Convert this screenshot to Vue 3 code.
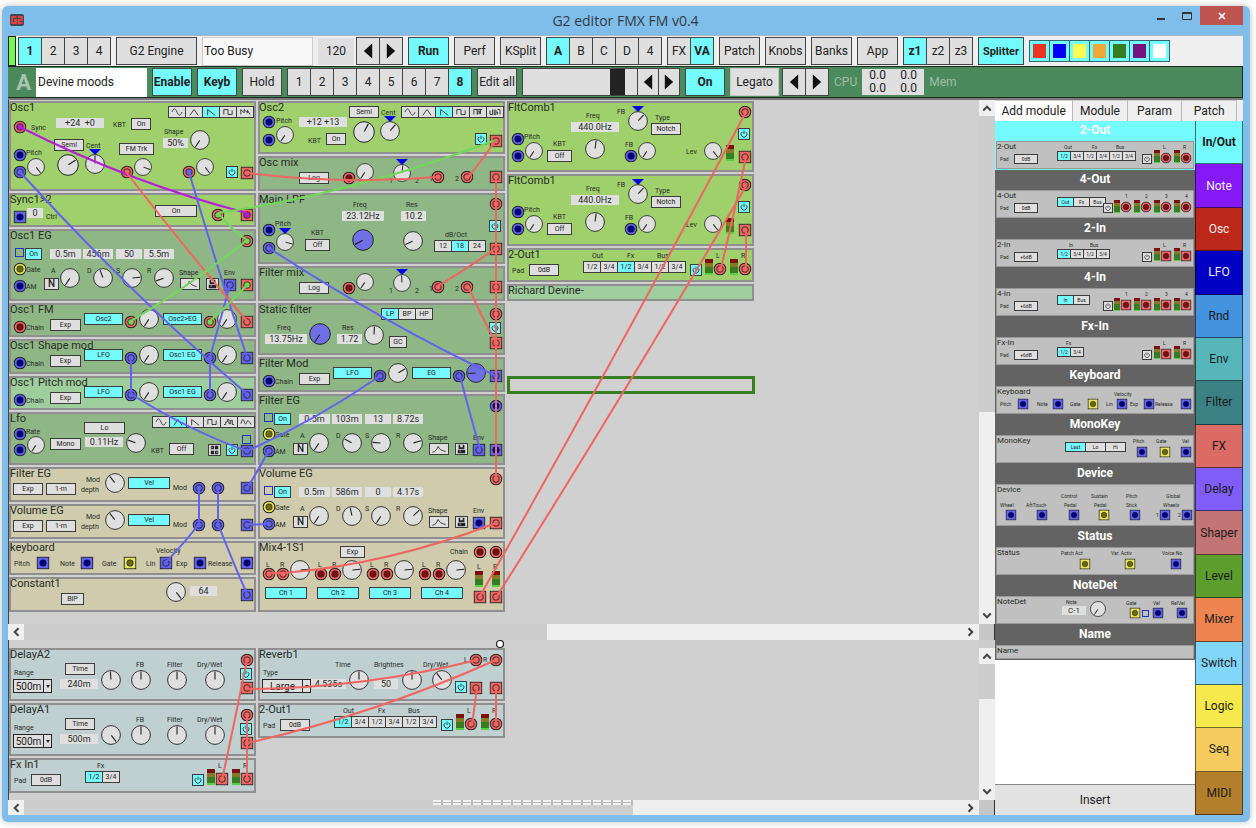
<script setup>
import { h } from 'vue'

/* ---------- part constructors ---------- */
const label = (x, y, text) => ({ kind: 'label', x, y, text })
const value = (x, y, w, text) => ({ kind: 'value', x, y, w, text })
const button = (x, y, w, text, on) => ({ kind: 'button', x, y, w, text, on })
const segment = (x, y, w, items, active) => ({ kind: 'segment', x, y, w, items, active })
const waves = (x, y, items, active) => ({ kind: 'waves', x, y, w: 18, items, active })
const knob = (x, y, d, angle, blue) => ({ kind: 'knob', x, y, d, angle, blue })
const marker = (x, y) => ({ kind: 'marker', x, y })
const input = (x, y, color, cable) => ({ kind: 'jack', x, y, color, cable })
const output = (x, y, color, cable) => ({ kind: 'jack', square: true, x, y, color, cable })
const power = (x, y, on = true) => ({ kind: 'icon', icon: 'power', x, y, w: 12, on })
const icon = (x, y, w, name) => ({ kind: 'icon', icon: name, x, y, w })
const meter = (x, y) => ({ kind: 'meter', x, y })
const check = (x, y) => ({ kind: 'check', x, y })
const select = (x, y, w, text) => ({ kind: 'select', x, y, w, text })

const plug = { r: '#ee6561', b: '#6262ee', y: '#e6e45e', g: '#74d75c', p: '#b321d6' }
const hole = { r: '#7a1010', b: '#000080', y: '#6c6a10' }

const wavePaths = {
  sine: 'M3 6C5 1 7 1 9 6S13 11 15 6',
  tri: 'M4 10L9 3L14 10',
  saw: 'M5 10V3L14 10',
  square: 'M4 9V3H9V9H14V4',
  multi: 'M4 9V3L8 7V3L12 7V4L15 9',
  dual: 'M4 9V3H8V9M6 3H14M9 9V5H11V8H12V3',
  comb: 'M3 4V9H6V3M8 3V9H10V3M10 6H12V9M12 3H15V9',
  steps: 'M3 9H5V6H7V3H9V8H11V4H13V9H15',
  smooth: 'M3 8C5 0 6 3 7 6S9 9 10 6S12 4 15 9',
}

const iconPaths = {
  power: 'M6 2V6M4 3.4A3.5 3.5 0 1 0 8 3.4',
  curve: 'M2 10C6 9 7 7 9 3C10 6 13 8 18 9',
}

const place = (p, s) => ({ left: Math.round(p.x * s) + 'px', top: Math.round(p.y * s) + 'px' })
const box = (p, s) => ({ ...place(p, s), width: Math.round(p.w * s) + 'px' })

const draw = {
  label: (p, s) => h('span', { class: 'p-label', style: place(p, s) }, p.text),
  value: (p, s) => h('output', { class: 'p-value', style: box(p, s) }, p.text),
  button: (p, s) => h('button', { class: ['p-button', p.on && 'on'], style: box(p, s) }, p.text),
  segment: (p, s) =>
    h('div', { class: 'p-segment', style: place(p, s) }, p.items.map((item, i) =>
      h('button', { class: ['p-button', i === p.active && 'on'], style: { width: Math.round(p.w * s) + 'px' } }, item))),
  waves: (p, s) =>
    h('div', { class: 'p-segment', style: place(p, s) }, p.items.map((item, i) =>
      h('button', { class: ['p-button', i === p.active && 'on'], style: { width: p.w + 'px' }, 'aria-label': item },
        h('svg', { class: 'p-wave', viewBox: '0 0 18 12' }, h('path', { d: wavePaths[item] }))))),
  knob: (p, s) => {
    const d = Math.round(p.d * s)
    return h('label', {
      class: 'p-knob',
      style: { ...place(p, s), width: d + 'px', height: d + 'px' },
    }, [
      h('svg', { viewBox: '0 0 20 20' }, [
        h('circle', { cx: 10, cy: 10, r: 9.4, class: p.blue ? 'dial blue' : 'dial' }),
        h('path', { d: 'M10 9.5V1.6', class: 'needle', transform: `rotate(${p.angle} 10 10)` }),
      ]),
      h('input', { type: 'range', min: -147, max: 147, value: p.angle, 'aria-label': 'Knob' }),
    ])
  },
  marker: (p, s) => h('span', { class: 'p-marker', style: place(p, s) }),
  jack: (p, s) => {
    const inner = p.cable ? plug[p.cable] : hole[p.color]
    const shape = p.square
      ? h('rect', { x: 0.7, y: 0.7, width: 12.6, height: 12.6, fill: plug[p.color], class: 'ring' })
      : h('circle', { cx: 7, cy: 7, r: 6.3, fill: plug[p.color], class: 'ring' })
    return h('button', { class: 'p-jack', style: place(p, s), 'aria-label': p.square ? 'Output' : 'Input' },
      h('svg', { viewBox: '0 0 14 14' }, [
        shape,
        h('circle', { cx: 7, cy: 7, r: 3.5, fill: inner, class: p.cable ? 'ring thin' : 'ring dark' }),
      ]))
  },
  icon: (p, s) => {
    let art
    if (p.icon === 'letter') art = 'N'
    else if (p.icon === 'disk') {
      art = h('svg', { viewBox: '0 0 13 12' }, [
        h('path', { d: 'M3 1H10V6H3ZM2 7H11V11H2Z', fill: '#222' }),
        h('path', { d: 'M5 1H8V4H5ZM4 8H6V9H4Z', fill: '#ddd' }),
      ])
    } else if (p.icon === 'grid') {
      art = h('svg', { viewBox: '0 0 13 12' }, [
        h('path', { d: 'M2 1H6V5H2ZM7 1H11V5H7ZM2 7H6V11H2ZM7 7H11V11H7Z', fill: '#222' }),
        h('path', { d: 'M3 2H4V4H3ZM9 8H10V10H9Z', fill: '#eee' }),
      ])
    } else {
      art = h('svg', { class: 'p-wave', viewBox: p.icon === 'curve' ? '0 0 20 12' : '0 0 12 12' },
        h('path', { d: iconPaths[p.icon] }))
    }
    return h('button', { class: ['p-button', 'p-icon', p.on && 'on', p.icon], style: box(p, s), 'aria-label': p.icon }, [art])
  },
  meter: (p, s) => h('span', { class: 'p-meter', style: place(p, s) }),
  check: (p, s) => h('span', { class: 'p-check', style: place(p, s) }),
  select: (p, s) =>
    h('div', { class: 'p-select', style: box(p, s) }, [
      h('select', { 'aria-label': 'Range' }, h('option', p.text)),
      h('span', { class: 'drop' }),
    ]),
}

const Parts = (props) => props.parts.map((p) => draw[p.kind](p, props.scale))
Parts.props = { parts: { type: Array, required: true }, scale: { type: Number, default: 1 } }

/* ---------- module faces ---------- */
const MIN = -147
const MAX = 142

const envelope = (vals, angles, top, am, env, out) => [
  check(6, 19), button(16, 19, 17, 'On', true),
  value(41, 20, 31, vals[0]), value(74, 20, 30, vals[1]), value(107, 20, 26, vals[2]), value(135, 20, 30, vals[3]),
  label(17, 41, 'Gate'), input(11, 40, 'y'), label(17, 58, 'AM'), input(11, 57, 'b', am),
  icon(35, 49, 15, 'letter'), label(42, 42, 'A'), label(78, 42, 'D'), label(107, 42, 'S'), label(138, 42, 'R'),
  knob(61, 49, 20, angles[0]), knob(94, 49, 20, angles[1]), knob(123, 49, 20, angles[2]), knob(155, 49, 20, angles[3]),
  label(170, 44, 'Shape'), icon(171, 49, 20, 'curve'), icon(197, 49, 13, 'disk'), label(215, 44, 'Env'),
  input(238, 12, top[0], top[1]), output(221, 56, 'b', env), output(238, 56, out[0], out[1]),
]

const modMixer = (color, a, b, jackA, jackB, angles, out, chain, blue) => [
  input(11, 24, chain), label(17, 25, 'Chain'), button(41, 16, 31, 'Exp'),
  button(75, 10, 39, a, true), input(122, 19, color, jackA), knob(140, 16, 20, angles[0]),
  button(154, 10, 39, b, true), knob(218, 16, 20, angles[1], blue), input(201, 19, color, jackB),
  output(238, 19, color, out),
]

const mix2 = (angle) => [
  button(41, 16, 30, 'Log'), input(91, 22, 'r'), knob(107, 16, 18, MIN),
  marker(144, 6), knob(144, 17, 18, angle), label(131, 25, '1'), label(157, 25, '2'),
  label(171, 23, '1'), input(180, 21, 'r', 'r'), label(197, 23, '2'), input(209, 21, 'r', 'r'), output(238, 21, 'r', 'r'),
]

const levelMod = () => [
  button(4, 16, 30, 'Exp'), button(37, 16, 30, '1-m'), label(77, 13, 'Mod'), label(72, 23, 'depth'),
  knob(106, 16, 20, -38), button(119, 10, 42, 'Vel', true), label(164, 21, 'Mod'),
  input(190, 21, 'b', 'b'), input(209, 21, 'b', 'b'), output(238, 21, 'b', 'b'),
]

const keyboardFace = (lin) => [
  label(5, 23, 'Pitch'), output(34, 22, 'b'), label(51, 23, 'Note'), output(78, 22, 'b'),
  label(93, 23, 'Gate'), output(121, 22, 'y'), label(147, 10, 'Velocity'), label(137, 23, 'Lin'),
  output(157, 22, 'b', lin), label(167, 23, 'Exp'), output(191, 22, 'b'), label(199, 23, 'Release'), output(238, 22, 'b'),
]

const comb = () => [
  input(11, 38, 'b'), label(17, 36, 'Pitch'), input(11, 55, 'b'), knob(27, 50, 18, MIN),
  label(46, 43, 'KBT'), button(40, 49, 25, 'Off'), label(79, 15, 'Freq'), value(64, 21, 48, '440.0Hz'),
  knob(88, 48, 20, 8), label(110, 11, 'FB'), marker(131, 8), knob(131, 20, 20, 42),
  label(148, 17, 'Type'), button(144, 22, 30, 'Notch'), label(118, 44, 'FB'), input(124, 55, 'b'),
  knob(140, 50, 18, MIN), label(179, 51, 'Lev'), knob(206, 50, 18, MAX), meter(219, 44),
  input(238, 11, 'r', 'r'), power(231, 27), output(238, 56, 'r', 'r'),
]

const stereoEnd = (jack, cable, on) => [
  power(183, 16, on), meter(198, 11), label(209, 8, 'L'), jack(213, 21, 'r', cable),
  meter(223, 11), label(234, 8, 'R'), jack(238, 21, 'r', cable),
]

const twoOut = (active, cable, on = true) => [
  label(5, 23, 'Pad'), button(22, 16, 30, '0dB'), label(85, 8, 'Out'), label(120, 8, 'Fx'), label(150, 8, 'Bus'),
  segment(76, 13, 18, ['1/2', '3/4', '1/2', '3/4', '1/2', '3/4'], active), ...stereoEnd(input, cable, on),
]

const fxIn = (pad, cable, on = true) => [
  label(5, 23, 'Pad'), button(22, 16, 30, pad), label(88, 8, 'Fx'), segment(76, 13, 18, ['1/2', '3/4'], 0),
  ...stereoEnd(output, cable, on),
]

const delay = (time, angle) => [
  label(5, 25, 'Range'), select(4, 31, 39, '500m'), button(56, 15, 30, 'Time'), value(51, 31, 38, time),
  knob(102, 32, 20, angle), label(127, 17, 'FB'), knob(132, 32, 20, 0), label(158, 17, 'Filter'), knob(168, 32, 20, 0),
  label(188, 17, 'Dry/Wet'), knob(206, 32, 20, 0), input(238, 12, 'r', 'r'), power(231, 20), output(238, 40, 'r', 'r'),
]

const quad = (jack) => [163, 188, 213, 238].flatMap((x, i) => [
  meter(x - 15, 12), label(x - 2, 8, String(i + 1)), jack(x, 21, 'r'),
])

/* ---------- patch ---------- */
const voiceColumns = [
  [
    { name: 'Osc1', rows: 5, tone: 'lime', parts: [
      input(11, 26, 'r', 'p'), label(22, 27, 'Sync'), value(47, 17, 48, '+24  +0'), label(104, 24, 'KBT'), button(122, 17, 20, 'On'),
      waves(159, 5, ['sine', 'tri', 'saw', 'square', 'multi'], 2), label(155, 31, 'Shape'), value(154, 37, 25, '50%'), knob(191, 39, 20, MIN),
      button(45, 38, 30, 'Semi'), label(77, 45, 'Cent'), knob(59, 64, 22, 57), marker(86, 51), knob(86, 63, 20, 0),
      input(11, 54, 'b'), label(17, 52, 'Pitch'), input(11, 71, 'b', 'b'), knob(27, 66, 18, MAX),
      button(110, 42, 35, 'FM Trk'), input(118, 71, 'r', 'r'), knob(134, 66, 18, 110),
      input(180, 71, 'r', 'b'), knob(196, 66, 18, MAX), power(217, 65), output(238, 72, 'r', 'r'),
    ] },
    { name: 'Sync1>2', rows: 2, tone: 'lime', parts: [
      output(11, 24, 'b'), value(18, 15, 16, '0'), label(37, 24, 'Ctrl'), button(146, 12, 42, 'On'), input(209, 22, 'r', 'g'), output(238, 22, 'r', 'p'),
    ] },
    { name: 'Osc1 EG', rows: 4, tone: 'green', parts: envelope(['0.5m', '456m', '50', '5.5m'], [MIN, -20, 85, -110], ['r', 'g'], null, 'b', ['r', 'g']) },
    { name: 'Osc1 FM', rows: 2, tone: 'green', parts: modMixer('r', 'Osc2', 'Osc2>EG', 'g', 'g', [MIN, MIN], 'r', 'r') },
    { name: 'Osc1 Shape mod', rows: 2, tone: 'green', parts: modMixer('b', 'LFO', 'Osc1 EG', 'b', 'b', [MIN, MIN], 'b', 'b') },
    { name: 'Osc1 Pitch mod', rows: 2, tone: 'mint', parts: modMixer('b', 'LFO', 'Osc1 EG', 'b', 'b', [MIN, MIN], 'b', 'b') },
    { name: 'Lfo', rows: 3, tone: 'green', parts: [
      label(17, 20, 'Rate'), input(11, 22, 'b'), input(11, 38, 'b'), knob(27, 33, 18, MIN), button(41, 26, 31, 'Mono'),
      button(75, 10, 41, 'Lo'), value(76, 25, 38, '0.11Hz'), knob(127, 31, 20, -70),
      waves(143, 4, ['sine', 'tri', 'saw', 'square', 'steps', 'smooth'], 1), label(142, 39, 'KBT'), button(160, 31, 25, 'Off'),
      icon(199, 32, 13, 'grid'), power(217, 32), check(233, 23), output(238, 39, 'b', 'b'),
    ] },
    { name: 'Filter EG', rows: 2, tone: 'sand', parts: levelMod() },
    { name: 'Volume EG', rows: 2, tone: 'sand', parts: levelMod() },
    { name: 'keyboard', rows: 2, tone: 'sand', parts: keyboardFace('b') },
    { name: 'Constant1', rows: 2, tone: 'sand', parts: [
      button(52, 16, 23, 'BiP'), knob(167, 15, 20, MAX), value(181, 9, 27, '64'), output(238, 18, 'b', 'b'),
    ] },
  ],
  [
    { name: 'Osc2', rows: 3, tone: 'lime', parts: [
      input(11, 21, 'b'), label(18, 20, 'Pitch'), input(11, 39, 'b'), knob(27, 34, 18, MIN), value(41, 16, 48, '+12 +13'),
      label(50, 40, 'KBT'), button(68, 32, 20, 'On'), button(91, 5, 30, 'Semi'), knob(106, 31, 22, 28), label(123, 12, 'Cent'),
      marker(132, 18), knob(132, 30, 20, 40), waves(143, 5, ['sine', 'tri', 'saw', 'square', 'dual', 'comb'], 2),
      power(217, 32), output(238, 40, 'r', 'r'),
    ] },
    { name: 'Osc mix', rows: 2, tone: 'green', parts: mix2(6) },
    { name: 'Main LPF', rows: 4, tone: 'green', parts: [
      input(11, 37, 'b'), label(17, 31, 'Pitch'), marker(27, 38), knob(27, 49, 18, 105), input(11, 55, 'b', 'b'),
      label(53, 40, 'KBT'), button(47, 46, 25, 'Off'), label(95, 12, 'Freq'), value(84, 18, 42, '23.12Hz'), knob(105, 47, 22, -120, true),
      label(148, 12, 'Res'), value(143, 18, 25, '10.2'), knob(155, 48, 20, -115), label(187, 42, 'dB/Oct'),
      segment(176, 47, 18, ['12', '18', '24'], 1), input(238, 11, 'r', 'r'), power(231, 27), output(238, 56, 'r', 'r'),
    ] },
    { name: 'Filter mix', rows: 2, tone: 'green', parts: mix2(-3) },
    { name: 'Static filter', rows: 3, tone: 'green', parts: [
      label(19, 25, 'Freq'), value(7, 31, 42, '13.75Hz'), knob(62, 31, 22, MIN, true), label(84, 25, 'Res'), value(79, 31, 25, '1.72'),
      knob(116, 32, 20, 3), segment(123, 5, 18, ['LP', 'BP', 'HP'], 0), button(131, 33, 18, 'GC'),
      input(238, 11, 'r', 'r'), power(231, 19), output(238, 40, 'r', 'r'),
    ] },
    { name: 'Filter Mod', rows: 2, tone: 'green', parts: modMixer('b', 'LFO', 'EG', 'b', 'b', [60, -93], 'b', 'b', true) },
    { name: 'Filter EG', rows: 4, tone: 'green', parts: envelope(['0.5m', '103m', '13', '8.72s'], [MIN, -62, -86, 74], ['b', null], 'b', 'b', ['b', null]) },
    { name: 'Volume EG', rows: 4, tone: 'sand', parts: envelope(['0.5m', '586m', '0', '4.17s'], [MIN, -12, MIN, 48], ['r', 'r'], 'b', null, ['r', 'r']) },
    { name: 'Mix4-1S1', rows: 4, tone: 'sand', parts: [
      button(82, 5, 25, 'Exp'), label(192, 11, 'Chain'), input(222, 11, 'r'), input(238, 11, 'r'),
      ...[0, 1, 2, 3].flatMap((i) => [
        label(8 + i * 52, 24, 'L'), label(22 + i * 52, 24, 'R'), knob(42 + i * 52, 29, 20, 85),
        input(11 + i * 52, 33, 'r', i ? null : 'r'), input(25 + i * 52, 33, 'r', i ? null : 'r'),
        button(7 + i * 52, 46, 42, 'Ch ' + (i + 1), true),
      ]),
      label(219, 26, 'L'), label(235, 26, 'R'), meter(217, 30), meter(234, 30), output(222, 56, 'r', 'r'), output(238, 56, 'r', 'r'),
    ] },
  ],
  [
    { name: 'FltComb1', rows: 4, tone: 'lime', parts: comb() },
    { name: 'FltComb1', rows: 4, tone: 'lime', parts: comb() },
    { name: '2-Out1', rows: 2, tone: 'lime', parts: twoOut(2, 'r') },
    { name: 'Richard Devine-', rows: 1, tone: 'mint', parts: [] },
  ],
]

const fxColumns = [
  [
    { name: 'DelayA2', rows: 3, tone: 'steel', parts: delay('240m', -4) },
    { name: 'DelayA1', rows: 3, tone: 'steel', parts: delay('500m', MAX) },
    { name: 'Fx In1', rows: 2, tone: 'steel', parts: fxIn('0dB', 'r') },
  ],
  [
    { name: 'Reverb1', rows: 3, tone: 'steel', parts: [
      label(5, 25, 'Type'), select(4, 31, 49, 'Large'), value(53, 31, 35, '4.535s'), label(77, 17, 'Time'), knob(101, 32, 20, 0),
      label(116, 17, 'Brightnes'), value(116, 31, 24, '50'), knob(154, 32, 20, 0), label(165, 17, 'Dry/Wet'), knob(184, 32, 20, -38),
      label(206, 12, 'L'), input(218, 12, 'r', 'r'), label(225, 12, 'R'), input(238, 12, 'r', 'r'),
      power(197, 33), output(218, 40, 'r', 'r'), output(238, 40, 'r', 'r'),
    ] },
    { name: '2-Out1', rows: 2, tone: 'steel', parts: twoOut(0, 'r') },
  ],
]

const cable = (color, x1, y1, x2, y2, sag = 0) => ({
  color: plug[color],
  d: `M${x1} ${y1}Q${(x1 + x2) / 2} ${(y1 + y2) / 2 + sag} ${x2} ${y2}`,
})

const voiceCables = [
  cable('p', 12, 27, 239, 113, 14),
  cable('b', 12, 72, 239, 294, 14),
  cable('b', 181, 72, 239, 257, 6),
  cable('b', 222, 185, 202, 257),
  cable('b', 202, 257, 202, 294),
  cable('b', 123, 257, 123, 294),
  cable('b', 123, 294, 239, 351, 8),
  cable('b', 239, 351, 372, 276, 8),
  cable('r', 118, 72, 239, 221, 4),
  cable('g', 210, 113, 239, 140, 4),
  cable('g', 210, 113, 488, 40, 16),
  cable('g', 239, 140, 123, 221, 6),
  cable('g', 239, 185, 202, 221, 2),
  cable('r', 239, 73, 430, 77, 10),
  cable('r', 488, 40, 460, 77, 2),
  cable('r', 488, 77, 488, 378),
  cable('r', 488, 148, 430, 186, 2),
  cable('r', 460, 186, 488, 242, 4),
  cable('b', 261, 148, 488, 276, 10),
  cable('b', 452, 276, 472, 349, 2),
  cable('b', 261, 350, 239, 388, 2),
  cable('b', 239, 424, 261, 423, 2),
  cable('b', 191, 388, 191, 424),
  cable('b', 210, 388, 210, 424),
  cable('b', 191, 424, 158, 462, 2),
  cable('b', 210, 424, 239, 494, 2),
  cable('r', 261, 473, 276, 473),
  cable('r', 276, 473, 488, 423, 16),
  cable('r', 472, 496, 738, 12, 8),
  cable('r', 489, 496, 738, 86, 8),
  cable('r', 738, 57, 713, 168, 4),
  cable('r', 738, 130, 738, 168),
]

const fxCables = [
  cable('r', 239, 20, 214, 140, 2),
  cable('r', 239, 74, 239, 140),
  cable('r', 239, 49, 469, 20, 14),
  cable('r', 239, 103, 488, 20, 14),
  cable('r', 469, 48, 464, 85),
  cable('r', 488, 48, 488, 85),
]

/* ---------- library ---------- */
const library = [
  { name: '2-Out', rows: 2, selected: true, parts: twoOut(0, null, false) },
  { name: '4-Out', rows: 2, parts: [
    label(5, 23, 'Pad'), button(22, 16, 30, '0dB'), segment(76, 9, 21, ['Out', 'Fx', 'Bus'], 0), power(134, 16, false), ...quad(input),
  ] },
  { name: '2-In', rows: 2, parts: [
    label(5, 23, 'Pad'), button(22, 16, 30, '+6dB'), label(91, 7, 'In'), label(118, 7, 'Bus'),
    segment(76, 13, 18, ['1/2', '3/4', '1/2', '3/4'], 0), ...stereoEnd(output, null, false),
  ] },
  { name: '4-In', rows: 2, parts: [
    label(5, 23, 'Pad'), button(22, 16, 30, '+6dB'), segment(76, 9, 21, ['In', 'Bus'], 0), power(134, 16, false), ...quad(output),
  ] },
  { name: 'Fx-In', rows: 2, parts: fxIn('+6dB', null, false) },
  { name: 'Keyboard', rows: 2, parts: keyboardFace(null) },
  { name: 'MonoKey', rows: 2, parts: [
    segment(86, 9, 26, ['Last', 'Lo', 'Hi'], 0), label(171, 8, 'Pitch'), output(182, 21, 'b'),
    label(200, 8, 'Gate'), output(211, 21, 'y'), label(232, 8, 'Vel'), output(238, 21, 'b'),
  ] },
  { name: 'Device', rows: 3, parts: [
    label(5, 26, 'Wheel'), output(19, 39, 'b'), label(37, 26, 'AftTouch'), output(58, 39, 'b'),
    label(81, 15, 'Control'), label(85, 26, 'Pedal'), output(97, 39, 'b'), label(119, 15, 'Sustain'), label(123, 26, 'Pedal'), output(135, 39, 'y'),
    label(163, 15, 'Pitch'), label(163, 26, 'Stick'), output(174, 39, 'b'), label(212, 15, 'Global'), label(209, 26, 'Wheels'),
    label(200, 39, '1'), output(211, 39, 'b'), label(228, 39, '2'), output(239, 39, 'b'),
  ] },
  { name: 'Status', rows: 2, parts: [
    label(81, 8, 'Patch Act'), output(111, 21, 'y'), label(144, 8, 'Var. Activ'), output(168, 21, 'y'), label(207, 8, 'Voice No.'), output(225, 21, 'b'),
  ] },
  { name: 'NoteDet', rows: 2, parts: [
    label(88, 8, 'Note'), value(83, 12, 30, 'C-1'), knob(127, 16, 20, MIN), label(163, 9, 'Gate'), output(174, 21, 'y'), check(182, 17),
    label(196, 9, 'Vel'), output(203, 21, 'b'), label(219, 9, 'RelVel'), output(232, 21, 'b'),
  ] },
  { name: 'Name', rows: 1, parts: [] },
]

const categories = [
  ['In/Out', 'inout'], ['Note', 'note'], ['Osc', 'osc'], ['LFO', 'lfo'], ['Rnd', 'rnd'], ['Env', 'env'], ['Filter', 'filter'], ['FX', 'fx'],
  ['Delay', 'delay'], ['Shaper', 'shaper'], ['Level', 'level'], ['Mixer', 'mixer'], ['Switch', 'switch'], ['Logic', 'logic'], ['Seq', 'seq'], ['MIDI', 'midi'],
].map(([name, tone]) => ({ name, tone }))

const swatches = ['red', 'blue', 'yellow', 'orange', 'green', 'purple', 'white']
</script>

<template>
  <div class="window">
    <header class="titlebar">
      <svg class="logo" viewBox="0 0 14 12" aria-hidden="true">
        <rect width="14" height="12" rx="2" fill="#4a4550" />
        <path d="M6.5 3H2V9H6V6H4M8 3H12V6H8.5V9H12.5" fill="none" stroke="#e0413c" stroke-width="1.8" />
      </svg>
      <h1>G2 editor FMX FM v0.4</h1>
      <div class="controls">
        <button aria-label="Minimize"><svg viewBox="0 0 10 10"><path d="M1 8H9" stroke="#333" stroke-width="2" /></svg></button>
        <button aria-label="Maximize"><svg viewBox="0 0 10 10"><path d="M.5 1.5H9.5V8.5H.5ZM.5 2.5H9.5" fill="none" stroke="#333" /></svg></button>
        <button class="close" aria-label="Close"><svg viewBox="0 0 10 10"><path d="M2 2L8 8M8 2L2 8" stroke="#fff" stroke-width="1.7" /></svg></button>
      </div>
    </header>

    <main class="client">
      <div class="bar perf">
        <span class="lamp"></span>
        <div class="group first"><button v-for="n in 4" :key="n" :class="{ on: n === 1 }">{{ n }}</button></div>
        <button class="engine">G2 Engine</button>
        <input class="field soft" aria-label="Performance" value="Too Busy">
        <output class="tempo">120</output>
        <div class="group arrows">
          <button aria-label="Slower"><svg viewBox="0 0 12 18"><path d="M11 0V18L1 9Z" /></svg></button>
          <button aria-label="Faster"><svg viewBox="0 0 12 18"><path d="M1 0V18L11 9Z" /></svg></button>
        </div>
        <button class="wide on">Run</button>
        <button class="wide">Perf</button>
        <button class="wide">KSplit</button>
        <div class="group"><button v-for="s in ['A', 'B', 'C', 'D', '4']" :key="s" :class="{ on: s === 'A' }">{{ s }}</button></div>
        <div class="group"><button>FX</button><button class="on">VA</button></div>
        <button v-for="s in ['Patch', 'Knobs', 'Banks', 'App']" :key="s" class="wide">{{ s }}</button>
        <div class="group"><button v-for="s in ['z1', 'z2', 'z3']" :key="s" :class="{ on: s === 'z1' }">{{ s }}</button></div>
        <button class="splitter on">Splitter</button>
        <div class="swatches"><button v-for="s in swatches" :key="s" :class="s" :aria-label="s"></button></div>
      </div>

      <div class="bar slot">
        <span class="slot-name">A</span>
        <input class="field" aria-label="Patch name" value="Devine moods">
        <button class="wide on">Enable</button>
        <button class="wide on">Keyb</button>
        <button class="wide">Hold</button>
        <div class="group"><button v-for="n in 8" :key="n" :class="{ on: n === 8 }">{{ n }}</button></div>
        <button class="wide">Edit all</button>
        <label class="morph">
          <span class="thumb"></span>
          <input type="range" aria-label="Volume" min="0" max="100" value="83">
        </label>
        <div class="group arrows narrow">
          <button aria-label="Previous"><svg viewBox="0 0 12 18"><path d="M11 0V18L1 9Z" /></svg></button>
          <button aria-label="Next"><svg viewBox="0 0 12 18"><path d="M1 0V18L11 9Z" /></svg></button>
        </div>
        <button class="wide on">On</button>
        <button class="legato">Legato</button>
        <div class="group arrows last">
          <button aria-label="Previous mode"><svg viewBox="0 0 12 18"><path d="M11 0V18L1 9Z" /></svg></button>
          <button aria-label="Next mode"><svg viewBox="0 0 12 18"><path d="M1 0V18L11 9Z" /></svg></button>
        </div>
        <span class="stat">CPU</span>
        <output class="load"><span>0.0</span><span>0.0</span><span>0.0</span><span>0.0</span></output>
        <span class="stat">Mem</span>
      </div>

      <div class="work">
        <div class="patches">
          <section class="pane voice" aria-label="Voice area">
            <div class="surface">
              <div v-for="(col, c) in voiceColumns" :key="c" class="column">
                <article v-for="(m, i) in col" :key="i" class="module" :class="m.tone" :style="{ gridRowEnd: 'span ' + m.rows }">
                  <h2>{{ m.name }}</h2>
                  <Parts :parts="m.parts" />
                </article>
                <div v-if="c === 2" class="cursor"></div>
              </div>
              <svg class="cables"><path v-for="(w, i) in voiceCables" :key="i" :d="w.d" :stroke="w.color" /></svg>
            </div>
            <div class="vscroll">
              <button aria-label="Up"><svg viewBox="0 0 8 8"><path d="M1 6L4 3L7 6" /></svg></button>
              <span class="track"></span><span class="bar-thumb"></span>
              <button aria-label="Down"><svg viewBox="0 0 8 8"><path d="M1 2L4 5L7 2" /></svg></button>
            </div>
          </section>
          <div class="hscroll">
            <button aria-label="Left"><svg viewBox="0 0 8 8"><path d="M6 1L3 4L6 7" /></svg></button>
            <span class="track"></span><span class="bar-thumb"></span>
            <button aria-label="Right"><svg viewBox="0 0 8 8"><path d="M2 1L5 4L2 7" /></svg></button>
            <span class="corner"></span>
          </div>
          <section class="pane fx-area" aria-label="FX area">
            <div class="surface">
              <div v-for="(col, c) in fxColumns" :key="c" class="column">
                <article v-for="(m, i) in col" :key="i" class="module" :class="m.tone" :style="{ gridRowEnd: 'span ' + m.rows }">
                  <h2>{{ m.name }}</h2>
                  <Parts :parts="m.parts" />
                </article>
              </div>
              <svg class="cables">
                <path v-for="(w, i) in fxCables" :key="i" :d="w.d" :stroke="w.color" />
                <circle cx="492" cy="4" r="3.5" fill="#fff" stroke="#222" stroke-width="1.2" />
              </svg>
            </div>
            <div class="vscroll">
              <button aria-label="Up"><svg viewBox="0 0 8 8"><path d="M1 6L4 3L7 6" /></svg></button>
              <span class="track"></span><span class="bar-thumb"></span>
              <button aria-label="Down"><svg viewBox="0 0 8 8"><path d="M1 2L4 5L7 2" /></svg></button>
            </div>
          </section>
          <div class="hscroll lower">
            <button aria-label="Left"><svg viewBox="0 0 8 8"><path d="M6 1L3 4L6 7" /></svg></button>
            <span class="track"><span class="grip"></span></span><span class="bar-thumb"></span>
            <button aria-label="Right"><svg viewBox="0 0 8 8"><path d="M2 1L5 4L2 7" /></svg></button>
            <span class="corner"></span>
          </div>
        </div>

        <aside class="side">
          <nav class="tabs">
            <button class="active">Add module</button><button>Module</button><button>Param</button><button>Patch</button>
          </nav>
          <div class="side-body">
            <div class="library">
              <div class="entries">
                <section v-for="m in library" :key="m.name" class="entry" :class="{ selected: m.selected }">
                  <h3>{{ m.name }}</h3>
                  <article class="module mini" :class="'rows-' + m.rows">
                    <h2>{{ m.name }}</h2>
                    <Parts :parts="m.parts" :scale="0.8" />
                  </article>
                </section>
              </div>
              <button class="insert">Insert</button>
            </div>
            <nav class="categories">
              <button v-for="c in categories" :key="c.name" :class="c.tone">{{ c.name }}</button>
            </nav>
          </div>
        </aside>
      </div>
    </main>
  </div>
</template>

<style scoped>
.window {
  display: flex;
  flex-direction: column;
  flex: 1;
  min-width: 0;
  padding: 0 7px 7px 6px;
  background: #7fbdea;
  border-radius: 6px;
  box-shadow: 0 0 6px rgba(0, 0, 0, 0.25);
  font-family: Roboto, "Liberation Sans", sans-serif;
  color: #222;
}
button { font: inherit; color: inherit; padding: 0; margin: 0; border: 0; border-radius: 0; background: none; }

.titlebar { display: grid; grid-template-columns: 140px 1fr 140px; height: 29px; flex: none; align-items: center; }
.logo { width: 14px; height: 12px; margin-left: 2px; margin-top: -2px; }
.titlebar h1 { margin: 0; text-align: center; font: 14px "Open Sans", sans-serif; color: #333c44; }
.controls { display: flex; align-self: start; justify-content: flex-end; }
.controls button { width: 26px; height: 19px; display: flex; align-items: center; justify-content: center; }
.controls svg { width: 10px; height: 10px; }
.controls .close { width: 43px; background: #bd5450; }

.client { flex: 1; min-height: 0; display: flex; flex-direction: column; background: #efefef; }
.bar { display: flex; align-items: center; gap: 5px; flex: none; box-sizing: border-box; font-size: 12px; }
.perf { height: 31px; background: #efefef; border-top: 1px solid #a5b7c4; }
.slot { height: 32px; background: #4a8a5c; border: 1px solid #1c2b20; border-left: 0; }
.lamp { width: 8px; box-sizing: border-box; align-self: stretch; background: #75f850; border: 1px solid #222; }
.first { margin-left: -3px; }
.bar button { height: 28px; background: #dfdfdf; border: 1px solid #444; text-align: center; white-space: nowrap; flex: none; }
.bar button.on { background: #74fbfd; font-weight: 700; }
.group { display: flex; }
.group button { width: 24px; }
.group button + button { margin-left: -1px; }
.bar .wide { width: 41px; }
.slot .wide { width: 40px; }
.bar .engine { width: 81px; }
.bar .splitter { width: 46px; font-size: 11px; }
.field { box-sizing: border-box; width: 111px; height: 29px; border: 0; padding: 0 2px; font: inherit; color: #222; background: #fff; }
.field.soft { background: #f8f8f8; border: 1px solid #ccc; padding: 0 1px; }
.tempo { width: 36px; line-height: 27px; background: #dfdfdf; text-align: center; margin-right: -3px; }
.arrows svg { width: 10px; height: 18px; display: block; margin: auto; fill: #111; }
.narrow { margin-left: -6px; }
.bar .narrow button { width: 22px; }
.swatches { display: flex; }
.bar .swatches button { width: 21px; height: 22px; border: 1px solid #2f6a6a; outline: 3px solid #74fbfd; outline-offset: -4px; }
.swatches button + button { margin-left: -1px; }
.bar .swatches .red { background: #eb3423; }
.bar .swatches .blue { background: #0000f5; }
.bar .swatches .yellow { background: #fffe54; }
.bar .swatches .orange { background: #f0a73a; }
.bar .swatches .green { background: #377e22; }
.bar .swatches .purple { background: #75147c; }
.bar .swatches .white { background: #fff; }
.slot-name { width: 23px; text-align: right; font-size: 22px; font-weight: 700; color: #a9c4b1; }
.morph { position: relative; width: 114px; height: 26px; border: 1px solid #444; background: #dfdfdf; display: flex; align-items: stretch; box-sizing: content-box; flex: none; }
.morph input { position: absolute; inset: 0; width: 100%; margin: 0; opacity: 0; }
.morph .thumb { width: 15px; background: #222; margin-left: 87px; }
.bar .legato { width: 49px; border-color: #c8c8c8; }
.last { margin-left: -2px; }
.stat { color: #a3bda9; }
.load { display: grid; grid-template-columns: 1fr 1fr; width: 62px; background: #dfdfdf; line-height: 13px; text-align: center; }

.work { flex: 1; min-height: 0; display: flex; border-top: 2px solid #777; }
.patches { flex: 1; min-width: 0; display: flex; flex-direction: column; background: #d0d0d0; }
.pane { display: flex; min-height: 0; overflow: hidden; }
.voice { flex: 524 1 0; }
.fx-area { flex: 160 1 0; }
.surface { position: relative; flex: 1; min-width: 0; overflow: hidden; display: flex; align-items: flex-start; padding: 1px 0 0; border-left: 1px solid #444; box-sizing: border-box; }
.fx-area .surface { padding-top: 8px; }
.column { display: grid; grid-template-rows: repeat(28, 1fr); width: 249px; height: 513px; flex: none; }
.fx-area .column { grid-template-rows: repeat(8, 1fr); height: 147px; }
.cables { position: absolute; left: -1px; top: 0; width: 100%; height: 100%; fill: none; stroke-width: 2; pointer-events: none; }
.cursor { grid-row: 16; border: 3px solid #377e22; margin-right: 1px; }

.vscroll { width: 16px; flex: none; display: flex; flex-direction: column; background: #cdcdcd; }
.vscroll button, .hscroll button { width: 16px; height: 16px; background: #efefef; flex: none; display: flex; align-items: center; justify-content: center; }
.vscroll svg, .hscroll svg { width: 10px; height: 10px; fill: none; stroke: #444; stroke-width: 1.6; }
.voice .track { flex: 296; }
.bar-thumb { background: #efefef; }
.voice .bar-thumb { flex: 196; }
.fx-area .vscroll { padding-top: 8px; }
.fx-area .track { flex: 35; }
.fx-area .bar-thumb { flex: 85; }
.hscroll { height: 16px; flex: none; display: flex; background: #cdcdcd; }
.hscroll .track { flex: 524; display: flex; justify-content: flex-end; }
.hscroll .bar-thumb { flex: 416; }
.hscroll .corner { width: 16px; background: #c6c6c6; border-right: 1px solid #333; box-sizing: border-box; }
.lower { height: 15px; }
.lower button { height: 15px; }
.lower .track { flex: 610; }
.lower .bar-thumb { flex: 330; }
.grip {
  width: 200px;
  height: 5px;
  background:
    linear-gradient(transparent 0 2px, #b8b8b8 2px 3px, transparent 3px),
    repeating-linear-gradient(90deg, #f2f2f2 0 8px, #bbb 8px 10px);
}

.side { width: 248px; flex: none; display: flex; flex-direction: column; background: #efefef; }
.tabs { display: flex; height: 21px; flex: none; font-size: 12px; padding-right: 6px; }
.tabs button { flex: 57 1 0; border-right: 1px solid #bbb; border-top: 1px solid #ccc; }
.tabs .active { background: #fff; flex-grow: 82; }
.side-body { flex: 1; min-height: 0; display: flex; }
.library { flex: 1; min-width: 0; display: flex; flex-direction: column; background: #fff; }
.entries { flex: 1; min-height: 0; overflow: hidden; }
.entry { background: #636363; padding: 0 1px; display: flow-root; }
.entry.selected { background: #74fbfd; }
.entry h3 { margin: 0; font-size: 12px; line-height: 19px; height: 20px; color: #fff; text-align: center; }
.insert { height: 31px; flex: none; background: #e2e2e2; border-top: 1px solid #888; font-size: 12px; }
.categories { width: 48px; flex: none; display: flex; flex-direction: column; }
.categories button { flex: 1 1 0; border: 1px solid rgba(0, 0, 0, 0.55); border-top: 0; font-size: 12px; color: #1a1a1a; }
.categories .inout { background: #74fbfd; font-weight: 700; }
.categories .note { background: #8419f5; color: #eee; }
.categories .osc { background: #bb281a; color: #eee; }
.categories .lfo { background: #0000c4; color: #eee; }
.categories .rnd { background: #4393df; }
.categories .env { background: #57b6ba; }
.categories .filter { background: #3b8083; }
.categories .fx { background: #dc6b65; }
.categories .delay { background: #7f5df6; }
.categories .shaper { background: #c37474; }
.categories .level { background: #5c9d2d; }
.categories .mixer { background: #ee8550; }
.categories .switch { background: #82d6fa; }
.categories .logic { background: #f6e94c; }
.categories .seq { background: #f6cb5e; }
.categories .midi { background: #b47f2c; }
</style>

<style>
html, body { margin: 0; height: 100%; background: #fdfdfd; }
#app { min-height: 100vh; box-sizing: border-box; padding: 6px 6px 6px 2px; display: flex; }

.module { position: relative; box-sizing: border-box; margin: 0 2px 2px 0; border: 2px solid #8f8f8f; min-height: 0; font-family: Roboto, sans-serif; color: #262b26; }
.module h2 { margin: -1px 0 0 -1px; font-size: 11px; line-height: 12px; font-weight: 400; white-space: nowrap; }
.module.lime { background: #9fd06c; }
.module.green { background: #8fb785; }
.module.mint { background: #9fce9e; }
.module.sand { background: #cfcbac; }
.module.steel { background: #c0d0d0; }

.p-label, .p-value, .p-button, .p-segment, .p-knob, .p-marker, .p-jack, .p-icon, .p-meter, .p-check, .p-select { position: absolute; margin: -2px 0 0 -2px; box-sizing: border-box; }
.p-label { font-size: 7px; line-height: 8px; margin-top: -6px; white-space: nowrap; }
.p-value { height: 10px; background: #dfdfdf; font-size: 9px; line-height: 10px; text-align: center; white-space: pre; }
.module .p-button { height: 12px; padding: 0; border: 1px solid #3c3c3c; background: #dfdfdf; font: 7px Roboto, sans-serif; line-height: 10px; color: #222; text-align: center; white-space: nowrap; border-radius: 0; overflow: hidden; }
.module .p-button.on { background: #74fbfd; }
.p-segment { display: flex; }
.module .p-segment .p-button { position: static; margin: 0; flex: none; }
.module .p-segment .p-button + .p-button { margin-left: -1px; }
.p-segment svg { display: block; width: 16px; height: 10px; margin: 0; }
.p-wave path { fill: none; stroke: #222; stroke-width: 1; }
.module .p-icon svg { display: block; width: 100%; height: 100%; }
.module .p-icon.letter { font-size: 10px; font-weight: 500; }
.p-knob { transform: translate(-50%, -50%); display: block; }
.p-knob svg { display: block; width: 100%; height: 100%; overflow: visible; }
.p-knob input { position: absolute; inset: 0; width: 100%; height: 100%; margin: 0; opacity: 0; }
.dial { fill: #dfdfdf; stroke: #222; stroke-width: 0.9; }
.dial.blue { fill: #6f6fe6; }
.needle { stroke: #222; stroke-width: 1.1; }
.p-marker { width: 0; height: 0; transform: translate(-50%, -50%); border: 6px solid transparent; border-top: 6px solid #0000f0; border-bottom: 0; }
.module .p-jack { width: 13px; height: 13px; padding: 0; border: 0; background: none; transform: translate(-50%, -50%); }
.p-jack svg { display: block; width: 100%; height: 100%; }
.ring { stroke: #222; stroke-width: 1.1; }
.ring.thin { stroke-width: 0.9; }
.ring.dark { stroke: #101020; stroke-width: 0.6; }
.p-meter { width: 8px; height: 16px; background: linear-gradient(#7a1010 0 25%, #86792a 25% 50%, #377e22 50% 90%, #55d040 90%); }
.p-check { width: 9px; height: 9px; border: 1px solid #2233cc; }
.p-select { height: 14px; border: 1px solid #222; background: #dfdfdf; display: flex; }
.p-select select { appearance: none; flex: 1; min-width: 0; border: 0; border-radius: 0; padding: 0; background: none; font: 10px Roboto, sans-serif; color: #222; text-align: center; }
.p-select .drop { width: 8px; border-left: 1px solid #222; display: flex; align-items: center; justify-content: center; box-sizing: border-box; }
.p-select .drop::after { content: ""; border: 2px solid transparent; border-top: 3px solid #222; border-bottom: 0; }

.module.mini { margin: 0 0 1px; height: 28px; border: 1px solid #999; background: #c0c0c0; }
.module.mini.rows-3 { height: 42px; }
.module.mini.rows-1 { height: 14px; }
.mini h2 { font-size: 8px; line-height: 9px; margin: 0; }
.mini .p-label, .mini .p-value, .mini .p-button, .mini .p-segment, .mini .p-knob, .mini .p-jack, .mini .p-meter, .mini .p-check { margin-left: -1px; margin-top: -1px; }
.mini .p-label { font-size: 5px; line-height: 6px; margin-top: -4px; }
.mini .p-value { font-size: 8px; height: 9px; line-height: 9px; }
.module.mini .p-button { height: 10px; font-size: 5px; line-height: 8px; }
.module.mini .p-jack { width: 11px; height: 11px; }
.mini .p-meter { width: 6px; height: 13px; }
.mini .p-check { width: 7px; height: 7px; }
</style>
